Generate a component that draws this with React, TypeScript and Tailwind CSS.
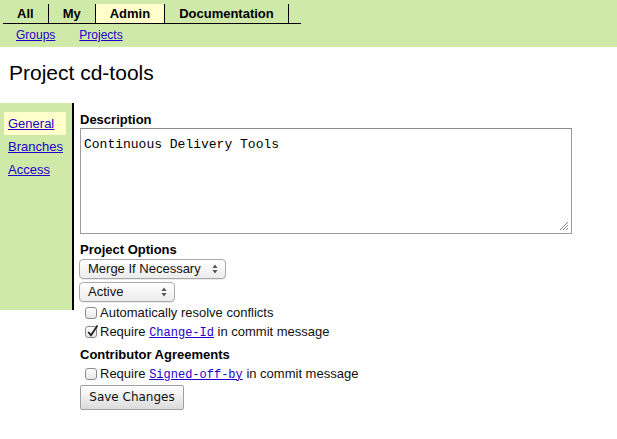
import React from "react";

const font = "font-['Liberation_Sans',Arial,sans-serif]";
const mono = "font-['Liberation_Mono','Courier_New',monospace]";
const linkCls = "text-[#2200cc] underline";

const tabs = [
  { label: "All", active: false },
  { label: "My", active: false },
  { label: "Admin", active: true },
  { label: "Documentation", active: false },
];

const SelectBox = ({ label, width }: { label: string; width: string }) => {
  return (
    <div
      className={`${width} h-[20px] flex items-center justify-between pl-[8px] pr-[7px] rounded-[4px] border border-[#a9a9a9] bg-gradient-to-b from-white to-[#ececec] shadow-[0_1px_0_rgba(0,0,0,0.08)] text-[13px] text-[#111]`}
    >
      <span>{label}</span>
      <svg width="6" height="10" viewBox="0 0 6 10">
        <path d="M3 0.5 L5.5 4 L0.5 4 Z" fill="#555" />
        <path d="M3 9.5 L5.5 6 L0.5 6 Z" fill="#555" />
      </svg>
    </div>
  );
};

const Check = ({ checked }: { checked?: boolean }) => {
  return (
    <span className="relative w-[12px] h-[12px] rounded-[3px] border border-[#8a8a8a] bg-gradient-to-b from-white to-[#e6e6e6] shrink-0">
      {checked && (
        <svg className="absolute left-[0px] top-[-3px]" width="13" height="14" viewBox="0 0 13 14">
          <path d="M2.2 8 L5 11.2 L11.5 1.5" stroke="#222" strokeWidth="1.8" fill="none" />
        </svg>
      )}
    </span>
  );
};

const CheckRow = ({ checked, children }: { checked?: boolean; children: React.ReactNode }) => {
  return (
    <div className="h-[19px] flex items-center gap-[3px] pl-[5px] text-[13px] text-[#111]">
      <Check checked={checked} />
      <span>{children}</span>
    </div>
  );
};

export default function App() {
  return (
    <div className={`${font} w-[617px] h-[439px] bg-white text-black`}>
      {/* top menu */}
      <div className="h-[47px] bg-[#cfe9a9] pt-[4px] pl-[3px]">
        <div className="flex w-[298px] h-[20px] border-b border-black">
          {tabs.map((t) => (
            <div
              key={t.label}
              className={`h-[19px] px-[14px] flex items-center border-r border-black text-[13px] font-bold ${
                t.active ? "bg-[#ffffcc]" : ""
              }`}
            >
              {t.label}
            </div>
          ))}
        </div>
        <div className="flex pl-[1px] pt-[2px] text-[12px]">
          <a className={`${linkCls} px-[12px]`}>Groups</a>
          <a className={`${linkCls} px-[12px]`}>Projects</a>
        </div>
      </div>

      <h1 className="mt-[14px] pl-[9px] text-[21px] leading-[24px] font-normal">Project cd-tools</h1>

      <div className="flex mt-[18px]">
        {/* side nav */}
        <div className="w-[74px] h-[207px] bg-[#cfe9a9] border-r-2 border-black pt-[9px] text-[13px] self-start">
          <div className="ml-[4px] w-[62px] h-[23px] pl-[4px] flex items-center bg-[#ffffcc]">
            <a className={linkCls}>General</a>
          </div>
          <div className="ml-[4px] h-[23px] pl-[4px] flex items-center">
            <a className={linkCls}>Branches</a>
          </div>
          <div className="ml-[4px] h-[23px] pl-[4px] flex items-center">
            <a className={linkCls}>Access</a>
          </div>
        </div>

        {/* main */}
        <div className="ml-[6px] pt-[9px] flex flex-col">
          <div className="text-[13px] leading-[15px] font-bold">Description</div>
          <div className="relative mt-[1px] w-[492px] h-[106px] border border-[#9c9c9c] border-t-[#8a8a8a] bg-white px-[3px] pt-[2px]">
            <span className={`${mono} text-[13px] leading-[15px]`}>Continuous Delivery Tools</span>
            <svg className="absolute right-[2px] bottom-[2px]" width="10" height="10" viewBox="0 0 10 10">
              <path d="M9 1 L1 9 M9 4 L4 9 M9 7 L7 9" stroke="#8a8a8a" strokeWidth="1" />
            </svg>
          </div>

          <div className="mt-[8px] text-[13px] leading-[15px] font-bold">Project Options</div>
          <div className="mt-[2px] ml-[-1px]">
            <SelectBox label="Merge If Necessary" width="w-[147px]" />
          </div>
          <div className="mt-[3px] ml-[-1px]">
            <SelectBox label="Active" width="w-[96px]" />
          </div>
          <div className="mt-[1px]">
            <CheckRow>Automatically resolve conflicts</CheckRow>
            <CheckRow checked>
              Require <a className={`${linkCls} ${mono} text-[12px]`}>Change-Id</a> in commit message
            </CheckRow>
          </div>

          <div className="mt-[6px] text-[13px] leading-[15px] font-bold">Contributor Agreements</div>
          <div className="mt-[2px]">
            <CheckRow>
              Require <a className={`${linkCls} ${mono} text-[12px]`}>Signed-off-by</a> in commit message
            </CheckRow>
          </div>
          <div className="mt-[1px]">
            <button className="w-[104px] h-[25px] border border-[#a0a0a0] rounded-[2px] bg-gradient-to-b from-white to-[#dcdcdc] font-['DejaVu_Sans',sans-serif] text-[12px] text-[#111]">
              Save Changes
            </button>
          </div>
        </div>
      </div>
    </div>
  );
}
